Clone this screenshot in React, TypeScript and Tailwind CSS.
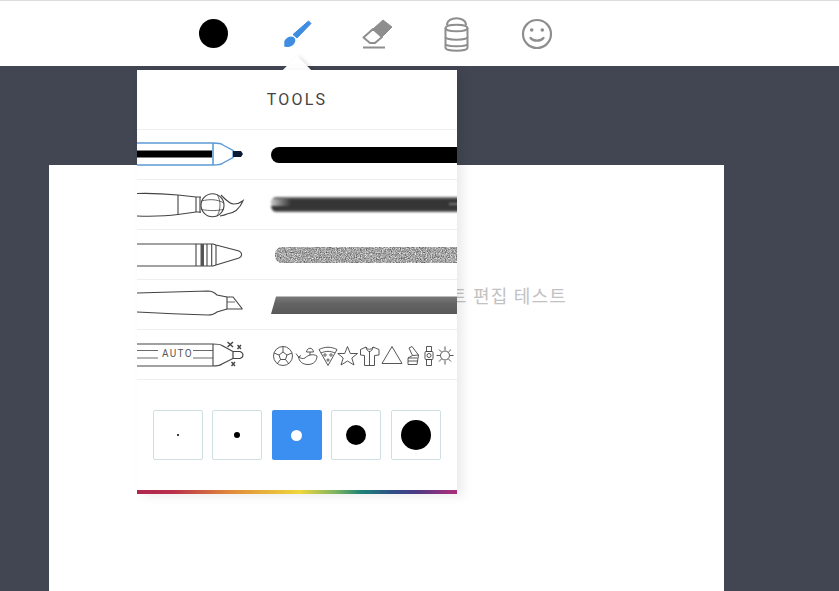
const ink = "#444";

function ToolbarIcons() {
  return (
    <div className="flex h-[65px] items-center pl-[177px]">
      <div className="flex h-10 w-20 items-center justify-center">
        <div className="mr-[7px] h-[29px] w-[29px] rounded-full bg-black" />
      </div>
      <div className="flex h-10 w-20 items-center justify-center">
        <svg width="40" height="40" viewBox="0 0 40 40" className="mt-[3px]">
          <path d="M31.5 6 L34 8.5 L20 23 L16 19.5 Z" fill="#3f8de0" stroke="#3f8de0" strokeLinejoin="round" />
          <path d="M14 21.5 C18 21.5 19 25 18 27 C17 31 11 33 7 31.5 C8 29 6 26 9 24 C10 22.5 12 21.5 14 21.5 Z" fill="#3f8de0" />
        </svg>
      </div>
      <div className="flex h-10 w-20 items-center justify-center">
        <svg width="40" height="40" viewBox="0 0 40 40" className="mt-[3px]">
          <path d="M16 14 L26 5 L35 12 L25 22 Z" fill="#8e8e8e" stroke="#8e8e8e" strokeLinejoin="round" />
          <path d="M16 14 L25 22 L18 28 H13 L6.5 22.5 Z" fill="#fff" stroke="#8e8e8e" strokeWidth="2" strokeLinejoin="round" />
          <rect x="6" y="31.5" width="22" height="2" fill="#8e8e8e" />
        </svg>
      </div>
      <div className="flex h-10 w-20 items-center justify-center">
        <svg width="40" height="40" viewBox="0 0 40 40" fill="none" stroke="#8e8e8e" strokeWidth="2" className="mt-[2px]">
          <path d="M8.5 13 V33 C8.5 36.5 30.5 36.5 30.5 33 V13" />
          <ellipse cx="19.5" cy="13" rx="11" ry="3.3" />
          <path d="M8.5 22 C8.5 25.5 30.5 25.5 30.5 22 M8.5 29 C8.5 32 30.5 32 30.5 29" />
          <path d="M10 10 C10 1 29 1 29 10" />
        </svg>
      </div>
      <div className="flex h-10 w-20 items-center justify-center">
        <svg width="40" height="40" viewBox="0 0 40 40" fill="none" stroke="#8e8e8e" strokeWidth="2.2">
          <circle cx="20" cy="20" r="14" />
          <circle cx="14.7" cy="16" r="1.8" fill="#8e8e8e" stroke="none" />
          <circle cx="25.3" cy="16" r="1.8" fill="#8e8e8e" stroke="none" />
          <path d="M13.5 24 C16 27.5 24 27.5 26.5 24" strokeLinecap="round" />
        </svg>
      </div>
    </div>
  );
}

function PenIcon() {
  return (
    <svg width="113" height="49" viewBox="0 0 113 49" fill="none">
      <rect x="0" y="20.5" width="75" height="7" fill="#000" />
      <path d="M0 13 H76 C80 13 84 13 86 15 L96 20.5 V27.5 L86 33 C84 35 80 35 76 35 H0" stroke="#5b9bd5" strokeWidth="1.4" />
      <path d="M76 13 V35" stroke="#5b9bd5" strokeWidth="1.6" />
      <path d="M96 21 H104 L106 24 L104 27 H96 Z" fill="#0b1a33" />
    </svg>
  );
}

function BrushIcon() {
  return (
    <svg width="113" height="49" viewBox="0 0 113 49" fill="none" stroke={ink} strokeWidth="1.1">
      <path d="M0 13.5 C16 13 30 14 41 15 L59 17 M0 36 C16 36.5 30 36 41 34.5 L59 32" />
      <path d="M41 15 V34.5 M59 17 V32 M63 16.5 V33 M59 17 H64 M59 32 H64" />
      <ellipse cx="75.5" cy="25.3" rx="11.5" ry="11.5" />
      <path d="M84 15 C88 19 92 24 97 24 C100 24 103 23 106 20.7 C103 28 98 33 90 34 C88 35 86 35.5 83 36" />
      <path d="M64.500 21 C72 19 80 19 87 23 M64.500 29.500 C72 31 82 31 87 29 M80 14.500 C84 20 84 30 80 36" strokeWidth="0.8" />
    </svg>
  );
}

function CrayonIcon() {
  return (
    <svg width="113" height="49" viewBox="0 0 113 49" fill="none" stroke={ink} strokeWidth="1.1">
      <path d="M0 14 H76 L79 15 L102 21 C105.500 22.500 105.500 26.500 102 28 L79 35 L76 36 H0" />
      <path d="M59 14 V36 M70 14 V36 M74.700 14 V36 M79 15 V35" />
      <rect x="63.500" y="14" width="3.500" height="22" fill="#555" stroke="none" />
    </svg>
  );
}

function MarkerIcon() {
  return (
    <svg width="113" height="49" viewBox="0 0 113 49" fill="none" stroke={ink} strokeWidth="1.1">
      <path d="M0 13 C25 12.500 50 11.500 71 11 C75 11 77 12 80 15 L90 17 M90 29 L80 32 C77 34.500 75 35 71 35 C50 34.500 25 33.500 0 32" />
      <path d="M90 17 H96 L105 28.500 V29 H90 Z" />
      <path d="M90 22 H98" strokeWidth="0.8" />
    </svg>
  );
}

function AutoIcon() {
  return (
    <div className="relative h-[49px] w-[113px]">
      <svg width="113" height="49" viewBox="0 0 113 49" fill="none" stroke={ink} strokeWidth="1.1" className="absolute inset-0">
        <path d="M0 14 H76 C80 14 83 14 85 15.500 L96 21.500 V28.500 L85 34 C83 35.500 80 36 76 36 H0" strokeWidth="1.2" />
        <path d="M76 14 V36" />
        <path d="M96 21.500 H103 C107 23 107 27 103 28.500 H96" />
        <path d="M0 20.500 H21 M0 28 H21 M56 20.500 H76 M56 28 H76" strokeWidth="0.8" />
        <path d="M90.500 12 L96 17 M96 12 L90.500 17 M100.500 15 L104 19 M104 15 L100.500 19 M94.500 32 L98 36 M98 32 L94.500 36" strokeWidth="1.4" />
      </svg>
      <span className="absolute top-[17px] left-[25px] text-[10px] leading-[14px] tracking-[1.3px] text-[#555]">AUTO</span>
    </div>
  );
}

function StampIcons() {
  return (
    <svg width="186" height="24" viewBox="0 0 186 24" fill="none" stroke="#444" strokeWidth="0.9">
      {/* ball */}
      <circle cx="12" cy="13" r="9.500" />
      <path d="M12 9 L16 12 L14.500 16.500 H9.500 L8 12 Z M12 9 V3.500 M16 12 L21 10 M14.500 16.500 L18 21 M9.500 16.500 L6 21 M8 12 L3 10" />
      {/* whale */}
      <path d="M25 10.500 L27.500 14 L30 12.500 M27.500 14 C28 18 31 21.500 37 21.500 C43 21.500 46 17.500 46 13 C42 10.500 37 12 34 15 C32 16 30 15.500 27.500 14" />
      <path d="M35.500 9 C36 4 42 4 42.500 9 Z M39 9 V12" />
      {/* pizza */}
      <path d="M48 6.500 C54 3.500 60 3.500 66 6.500 L57 22.500 Z M50 10 C55 7.800 59 7.800 64 10" />
      <circle cx="54" cy="12" r="1.200" />
      <circle cx="60" cy="12" r="1.200" />
      <circle cx="57" cy="17" r="1.100" />
      {/* star */}
      <path d="M76.500 3.500 L79.300 10.500 H86.500 L80.800 15 L83 22 L76.500 18 L70 22 L72.200 15 L66.800 10.500 H73.700 Z" />
      {/* shirt */}
      <path d="M95 4 L89.500 6.500 L89.500 12 L93.500 12.500 V22.500 H103.500 V12.500 L108 12 L108 6.500 L102 4 C101 7 96 7 95 4 Z M95 4 C96 10 101 10 102 4 M98.500 8 V22.500" />
      {/* triangle */}
      <path d="M121 3.500 L131 20.500 H111 Z" />
      {/* thumb */}
      <path d="M138 5 L141 3.500 L147.500 12 M138 5 L141.500 12.500 L137 15 V21.500 H146 L147.500 12 L141.500 12.500 M137 18 H146.500 M137 15 H146.500" />
      {/* watch */}
      <path d="M155.500 3.500 H160.500 V8.500 H155.500 Z M155.500 16.500 H160.500 V22.500 H155.500 Z" />
      <rect x="154" y="8.500" width="8" height="8" rx="1" />
      <circle cx="158" cy="12.500" r="2" />
      {/* sun */}
      <circle cx="174" cy="12.500" r="4.500" />
      <path d="M174 3.500 V7 M174 18 V21.500 M165.500 12.500 H169 M179 12.500 H182.500 M168 6.500 L170.700 9.200 M177.300 15.800 L180 18.500 M168 18.500 L170.700 15.800 M177.300 9.200 L180 6.500" />
    </svg>
  );
}

function InkStroke() {
  return <div className="h-4 w-[200px] rounded-l-full bg-black blur-[0.7px]" />;
}

function BrushStroke() {
  return (
    <div className="relative h-[15px] w-[200px] overflow-hidden rounded-l-md bg-[#353535] blur-[1px]">
      <div className="absolute top-0 left-0 h-[9px] w-5 bg-gradient-to-r from-[#ccc] to-[#353535]" />
      <div className="absolute top-0 left-0 h-[2px] w-full bg-[#6a6a6a]" />
      <div className="absolute bottom-0 left-0 h-[2px] w-full bg-[#555]" />
      <div className="absolute top-[6px] left-[178px] h-[2px] w-4 bg-[#777]" />
    </div>
  );
}

function NoiseStroke() {
  return (
    <svg width="186" height="18" viewBox="0 0 186 18" className="ml-[3px]">
      <defs>
        <filter id="grain" x="0" y="0" width="100%" height="100%" colorInterpolationFilters="sRGB">
          <feTurbulence type="fractalNoise" baseFrequency="0.8" numOctaves="2" seed="4" />
          <feColorMatrix values="0.900 0 0 0 0.190  0.900 0 0 0 0.190  0.900 0 0 0 0.190  0 0 0 0 1" />
          <feGaussianBlur stdDeviation="0.300" />
          <feComposite in2="SourceAlpha" operator="in" />
        </filter>
      </defs>
      <rect x="1" y="1" width="200" height="16" rx="7" fill="#000" filter="url(#grain)" />
    </svg>
  );
}

function ChiselStroke() {
  return (
    <svg width="186" height="18" viewBox="0 0 186 18">
      <defs>
        <linearGradient id="chisel" x1="0" y1="0" x2="0" y2="1">
          <stop offset="0" stopColor="#7a7a7a" />
          <stop offset="0.4" stopColor="#646464" />
          <stop offset="1" stopColor="#585858" />
        </linearGradient>
      </defs>
      <path d="M5 0.500 H186 V18 H0 Z" fill="url(#chisel)" />
    </svg>
  );
}

const rows = [
  { icon: <PenIcon />, stroke: <InkStroke /> },
  { icon: <BrushIcon />, stroke: <BrushStroke /> },
  { icon: <CrayonIcon />, stroke: <NoiseStroke /> },
  { icon: <MarkerIcon />, stroke: <ChiselStroke /> },
  { icon: <AutoIcon />, stroke: <StampIcons /> },
];

const sizes = [
  { dot: "h-[2px] w-[2px] bg-black", active: false },
  { dot: "h-[6px] w-[6px] bg-black", active: false },
  { dot: "h-[11px] w-[11px] bg-white", active: true },
  { dot: "h-5 w-5 bg-black", active: false },
  { dot: "h-[30px] w-[30px] bg-black", active: false },
];

function ToolsPanel() {
  return (
    <div className="absolute top-[70px] left-[137px] z-10 w-[320px]">
      <div className="absolute -top-[10px] left-[150px] h-5 w-5 rotate-45 bg-white shadow-[2px_-2px_4px_rgba(0,0,0,0.1)]" />
      <div className="relative bg-white shadow-[6px_2px_10px_rgba(0,0,0,0.08)]">
        <div className="flex h-[59px] items-center justify-center text-[16px] tracking-[2.2px] text-[#444]">
          TOOLS
        </div>
        {rows.map((r, i) => (
          <div key={i} className="flex h-[50px] items-center overflow-hidden border-t border-[#eeeeee]">
            <div className="w-[113px] shrink-0">{r.icon}</div>
            <div className="ml-[21px] shrink-0">{r.stroke}</div>
          </div>
        ))}
        <div className="flex h-[111px] gap-[9.5px] border-t border-[#eeeeee] pt-[30px] pl-[15.6px]">
          {sizes.map((s, i) => (
            <div
              key={i}
              className={
                s.active
                  ? "flex h-[50px] w-[50px] items-center justify-center rounded-[2px] bg-[#3a8ff0]"
                  : "flex h-[50px] w-[50px] items-center justify-center rounded-[2px] border border-[#cfdfe3] bg-white"
              }
            >
              <div className={"rounded-full " + s.dot} />
            </div>
          ))}
        </div>
        <div className="h-1 bg-[linear-gradient(90deg,#b0264f_0%,#b92f4c_11%,#e08a3a_29%,#efd73c_51%,#7cb460_62%,#1f8276_70%,#2f4e88_80%,#4b3a85_87%,#a32f7a_98%)]" />
      </div>
    </div>
  );
}

export default function App() {
  return (
    <div className="relative flex h-[591px] flex-col overflow-hidden bg-[#424652] font-['Roboto',sans-serif]">
      <div className="h-[66px] shrink-0 border-t border-[#dcdcdc] bg-white">
        <ToolbarIcons />
      </div>
      <div className="mt-[99px] ml-[49px] flex w-[675px] flex-1 justify-end bg-white pt-[118px] pr-[157px]">
        <span className="font-['Noto_Sans_CJK_KR',sans-serif] text-[18px] leading-6 tracking-[1.2px] text-[#c2c2c2]">텍스트 편집 테스트</span>
      </div>
      <ToolsPanel />
    </div>
  );
}
